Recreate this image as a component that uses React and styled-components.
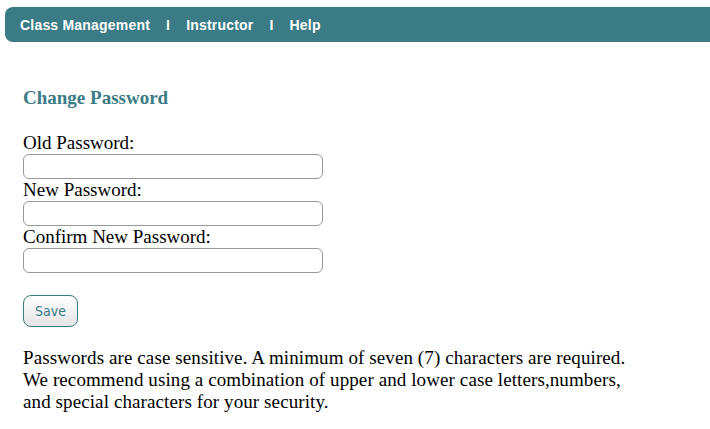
import React, { useState } from "react";
import styled, { createGlobalStyle } from "styled-components";

const GlobalStyle = createGlobalStyle`
  body {
    margin: 0;
    background: #ffffff;
    font-family: "Liberation Serif", "Times New Roman", serif;
    color: #000;
  }
`;

const Page = styled.div`
  padding: 7px 0 0 5px;
`;

const NavBar = styled.nav`
  display: flex;
  align-items: center;
  height: 35px;
  background: #3b7b86;
  border-radius: 8px 0 0 8px;
  padding-left: 15px;
  font-family: "Liberation Sans", Arial, sans-serif;
  font-weight: bold;
  font-size: 14px;
  letter-spacing: 0.2px;
  color: #ffffff;
`;

const NavLink = styled.a`
  color: #ffffff;
  text-decoration: none;
`;

const Sep = styled.span`
  padding: 0 16px;
`;

const Content = styled.main`
  padding: 45px 0 0 18px;
`;

const Heading = styled.h2`
  margin: 0;
  font-size: 19px;
  line-height: 22px;
  font-weight: bold;
  color: #3b7b86;
`;

const Form = styled.form`
  margin-top: 23px;
  display: flex;
  flex-direction: column;
  align-items: flex-start;
`;

const Label = styled.label`
  font-size: 19px;
  line-height: 21px;
`;

const Input = styled.input`
  box-sizing: border-box;
  width: 300px;
  height: 25px;
  margin: 1px 0 0;
  border: 1px solid #999999;
  border-radius: 6px;
  outline: none;
  padding: 0 6px;
`;

const SaveButton = styled.button`
  margin-top: 22px;
  width: 55px;
  height: 32px;
  border: 1px solid #3b7b86;
  border-radius: 8px;
  background: linear-gradient(#ffffff, #e4e4e4);
  color: #3b7b86;
  font-family: Tahoma, "DejaVu Sans Condensed", "DejaVu Sans", sans-serif;
  font-size: 14px;
  cursor: pointer;
`;

const Note = styled.p`
  margin: 20px 0 0;
  font-size: 19px;
  line-height: 22px;
  letter-spacing: 0.1px;
`;

export default function App() {
  const [vals, setVals] = useState({ old: "", next: "", confirm: "" });
  const handleChange = (e) => setVals({ ...vals, [e.target.name]: e.target.value });

  return (
    <Page>
      <GlobalStyle />
      <NavBar>
        <NavLink href="#">Class Management</NavLink>
        <Sep>I</Sep>
        <NavLink href="#">Instructor</NavLink>
        <Sep>I</Sep>
        <NavLink href="#">Help</NavLink>
      </NavBar>
      <Content>
        <Heading>Change Password</Heading>
        <Form onSubmit={(e) => e.preventDefault()}>
          <Label htmlFor="old">Old Password:</Label>
          <Input type="password" id="old" name="old" value={vals.old} onChange={handleChange} />
          <Label htmlFor="next">New Password:</Label>
          <Input type="password" id="next" name="next" value={vals.next} onChange={handleChange} />
          <Label htmlFor="confirm">Confirm New Password:</Label>
          <Input type="password" id="confirm" name="confirm" value={vals.confirm} onChange={handleChange} />
          <SaveButton type="submit">Save</SaveButton>
        </Form>
        <Note>
          Passwords are case sensitive. A minimum of seven (7) characters are required.
          <br />
          We recommend using a combination of upper and lower case letters,numbers,
          <br />
          and special characters for your security.
        </Note>
      </Content>
    </Page>
  );
}
